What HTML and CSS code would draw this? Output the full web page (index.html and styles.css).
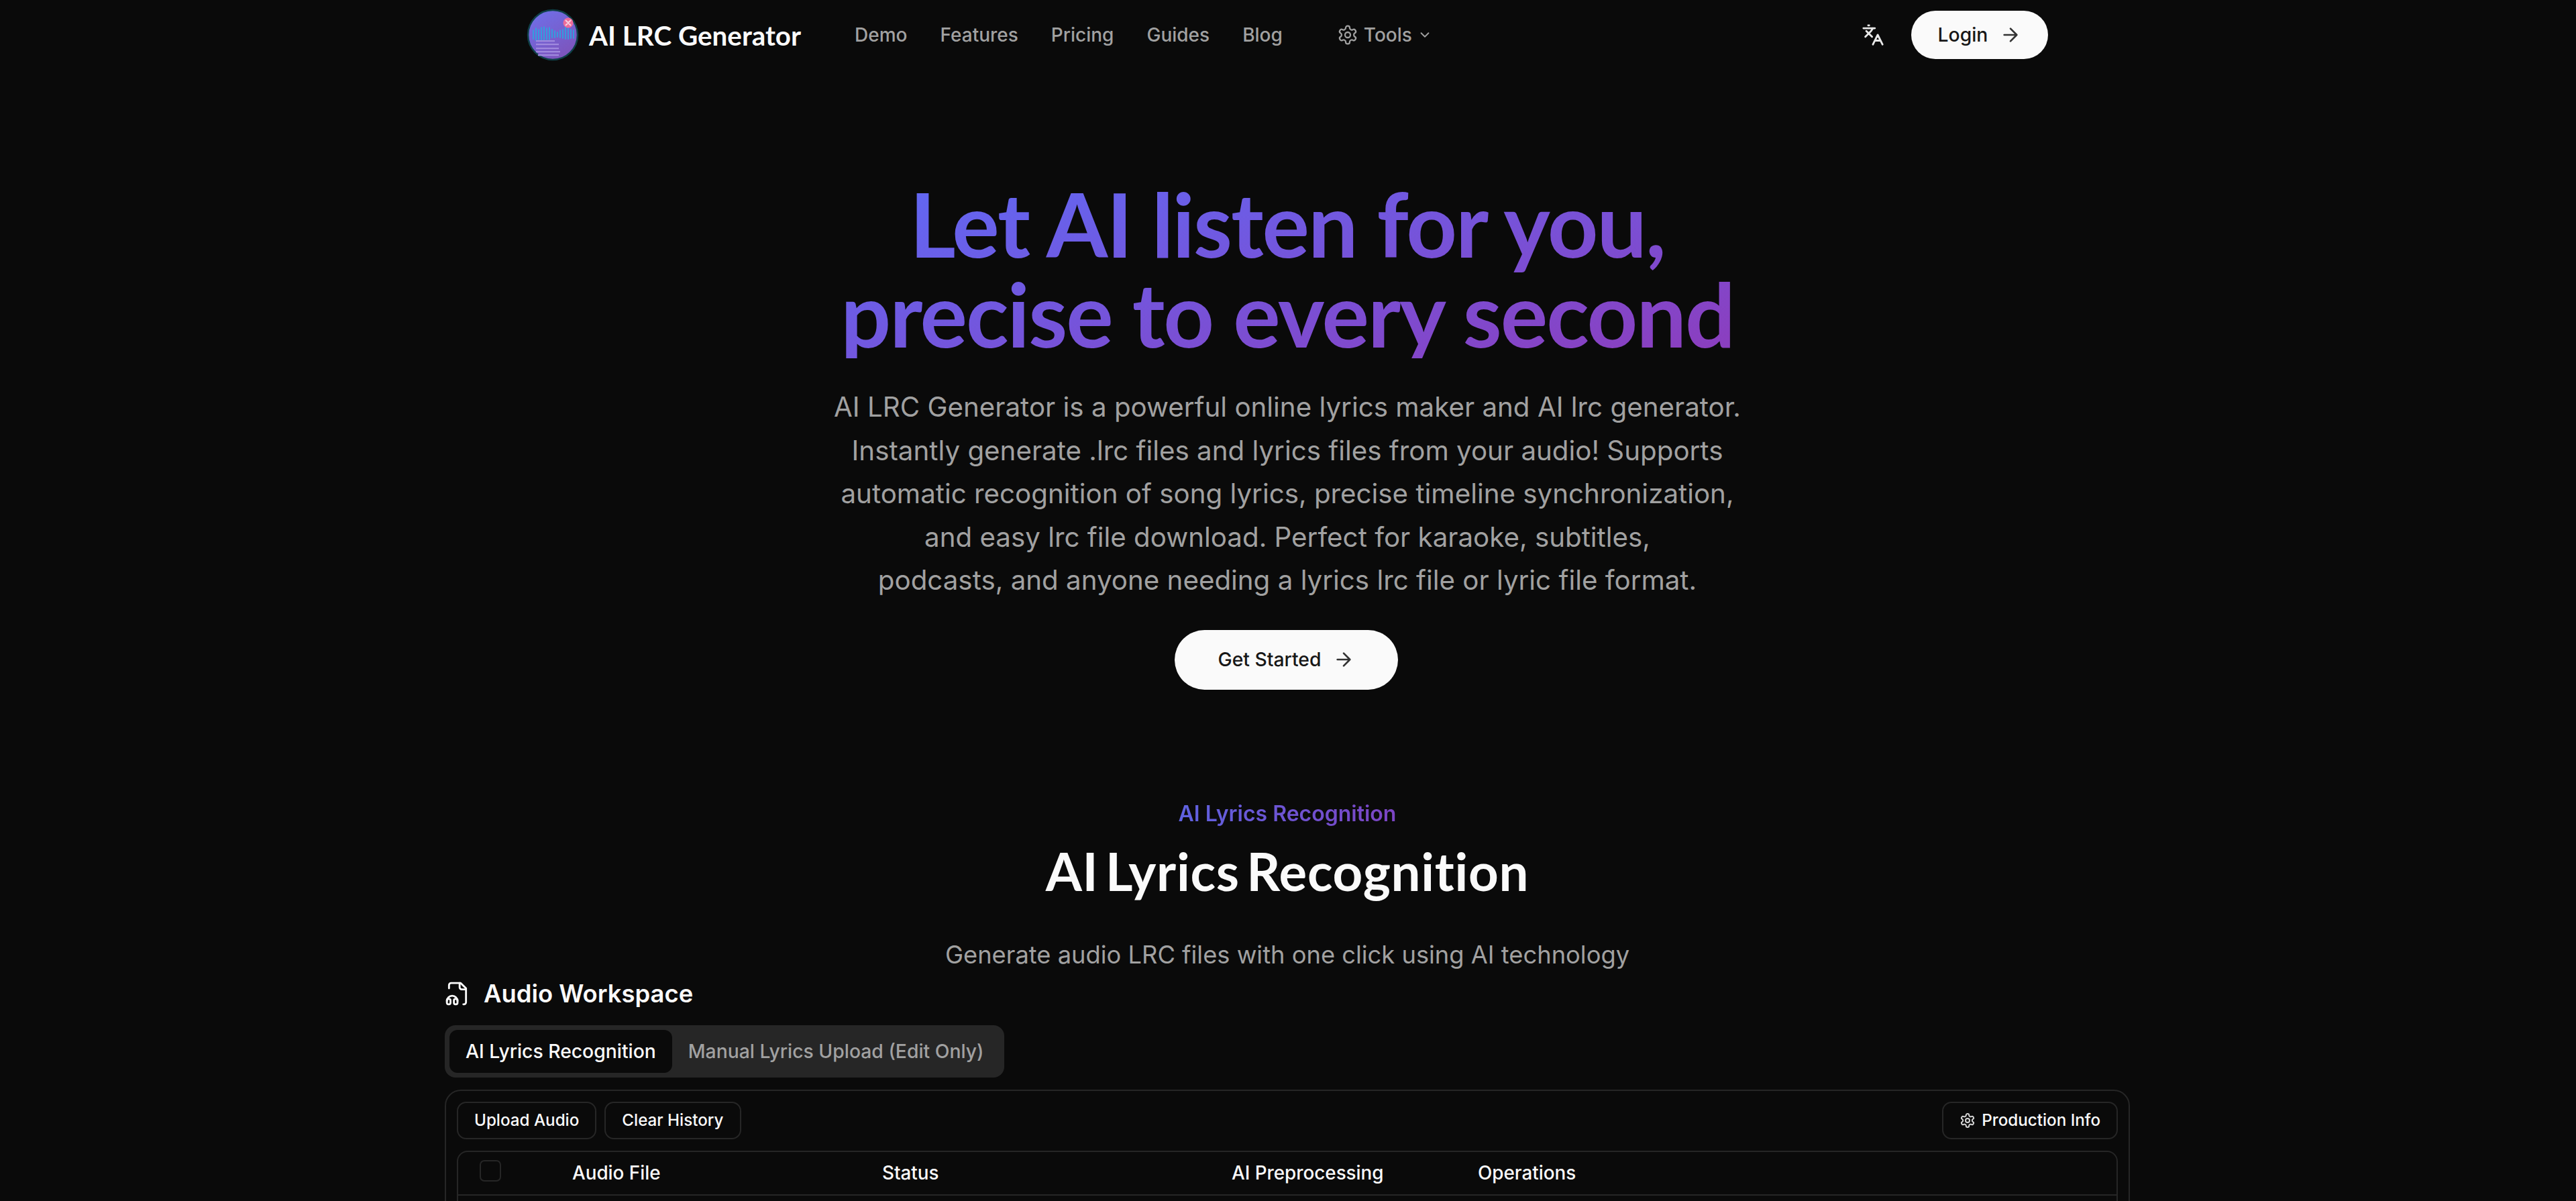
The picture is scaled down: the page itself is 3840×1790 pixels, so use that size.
FILE: index.html
```html
<!DOCTYPE html>
<html lang="en">
<head>
<meta charset="utf-8">
<title>AI LRC Generator</title>
<link rel="stylesheet" href="styles.css">
</head>
<body>
<header class="site-header">
  <div class="header-left">
    <a class="brand">
      <svg class="brand-logo" viewBox="0 0 78 78" aria-hidden="true">
        <defs>
          <linearGradient id="lg" x1="0.2" y1="0" x2="0.8" y2="1">
            <stop offset="0" stop-color="#6f6fe8"/><stop offset="1" stop-color="#7e52b8"/>
          </linearGradient>
        </defs>
        <circle cx="39" cy="39" r="37" fill="url(#lg)" stroke="#0f4048" stroke-width="2.5"/>
        <g stroke="#2aa8e0" stroke-width="1.7">
          <path d="M10 32v13M14 29v18M18 31v15M22 28v19M26 27v20M30 29v17M34 28v18M38 31v12M42 33v10M46 35v7M50 32v11M54 31v13M58 27v18M62 29v16M66 31v13M70 32v12"/>
        </g>
        <g fill="#a08ade">
          <rect x="14" y="47" width="28" height="2.2"/>
          <rect x="14" y="52" width="34" height="2.2"/>
          <rect x="14" y="58" width="34" height="2.2"/>
          <rect x="14" y="63" width="36" height="2.2"/>
          <rect x="17" y="68" width="31" height="2.2"/>
        </g>
        <circle cx="62" cy="21" r="7.5" fill="#ee6c9a"/>
        <path d="M58.5 17.5l7 7M65.5 17.5l-7 7" stroke="#f8d0e0" stroke-width="2"/>
      </svg>
      <span class="brand-name">AI LRC Generator</span>
    </a>
    <nav class="main-nav">
      <a>Demo</a><a>Features</a><a>Pricing</a><a>Guides</a><a>Blog</a>
      <a class="tools">
        <svg class="icon-gear" viewBox="0 0 24 24" aria-hidden="true"><path d="M12.22 2h-.44a2 2 0 0 0-2 2v.18a2 2 0 0 1-1 1.73l-.43.25a2 2 0 0 1-2 0l-.15-.08a2 2 0 0 0-2.73.73l-.22.38a2 2 0 0 0 .73 2.73l.15.1a2 2 0 0 1 1 1.72v.51a2 2 0 0 1-1 1.74l-.15.09a2 2 0 0 0-.73 2.73l.22.38a2 2 0 0 0 2.73.73l.15-.08a2 2 0 0 1 2 0l.43.25a2 2 0 0 1 1 1.73V20a2 2 0 0 0 2 2h.44a2 2 0 0 0 2-2v-.18a2 2 0 0 1 1-1.73l.43-.25a2 2 0 0 1 2 0l.15.08a2 2 0 0 0 2.73-.73l.22-.39a2 2 0 0 0-.73-2.73l-.15-.08a2 2 0 0 1-1-1.74v-.5a2 2 0 0 1 1-1.74l.15-.09a2 2 0 0 0 .73-2.73l-.22-.38a2 2 0 0 0-2.73-.73l-.15.08a2 2 0 0 1-2 0l-.43-.25a2 2 0 0 1-1-1.73V4a2 2 0 0 0-2-2z"/><circle cx="12" cy="12" r="3"/></svg>
        <span>Tools</span>
        <svg class="icon-chev" viewBox="0 0 24 24" aria-hidden="true"><path d="M6 9l6 6 6-6"/></svg>
      </a>
    </nav>
  </div>
  <div class="header-right">
    <svg class="icon-lang" viewBox="0 0 24 24" aria-hidden="true"><path d="M5 8l6 6M4 14l6-6 2-3M2 5h12M7 2h1M22 22l-5-10-5 10M14 18h6"/></svg>
    <a class="btn-pill btn-login">Login
      <svg class="icon-arrow" viewBox="0 0 24 24" aria-hidden="true"><path d="M5 12h14M12 5l7 7-7 7"/></svg>
    </a>
  </div>
</header>

<main>
  <section class="hero">
    <h1 class="hero-title"><span>Let AI listen for you,<br>precise to every second</span></h1>
    <p class="hero-sub">AI LRC Generator is a powerful online lyrics maker and AI lrc generator.<br>Instantly generate .lrc files and lyrics files from your audio! Supports<br>automatic recognition of song lyrics, precise timeline synchronization,<br>and easy lrc file download. Perfect for karaoke, subtitles,<br>podcasts, and anyone needing a lyrics lrc file or lyric file format.</p>
    <a class="btn-pill btn-start">Get Started
      <svg class="icon-arrow" viewBox="0 0 24 24" aria-hidden="true"><path d="M5 12h14M12 5l7 7-7 7"/></svg>
    </a>
  </section>

  <section class="section-head">
    <div class="eyebrow"><span>AI Lyrics Recognition</span></div>
    <h2 class="section-title">AI Lyrics Recognition</h2>
    <p class="section-sub">Generate audio LRC files with one click using AI technology</p>
  </section>

  <section class="workspace">
    <div class="ws-title">
      <svg class="icon-audio" viewBox="0 0 24 24" aria-hidden="true"><path d="M17.5 22H18a2 2 0 0 0 2-2V7l-5-5H6a2 2 0 0 0-2 2v3"/><path d="M14 2v4a2 2 0 0 0 2 2h4"/><path d="M2 19a5 5 0 0 1 10 0"/><rect x="2" y="17" width="3.4" height="5" rx="1.4"/><rect x="8.6" y="17" width="3.4" height="5" rx="1.4"/></svg>
      <span>Audio Workspace</span>
    </div>
    <div class="tabs">
      <button class="tab tab-active">AI Lyrics Recognition</button>
      <button class="tab">Manual Lyrics Upload (Edit Only)</button>
    </div>
    <div class="card">
      <div class="toolbar">
        <div class="toolbar-group">
          <button class="btn-outline">Upload Audio</button>
          <button class="btn-outline">Clear History</button>
        </div>
        <button class="btn-outline btn-info">
          <svg class="icon-gear-sm" viewBox="0 0 24 24" aria-hidden="true"><path d="M12.22 2h-.44a2 2 0 0 0-2 2v.18a2 2 0 0 1-1 1.73l-.43.25a2 2 0 0 1-2 0l-.15-.08a2 2 0 0 0-2.73.73l-.22.38a2 2 0 0 0 .73 2.73l.15.1a2 2 0 0 1 1 1.72v.51a2 2 0 0 1-1 1.74l-.15.09a2 2 0 0 0-.73 2.73l.22.38a2 2 0 0 0 2.73.73l.15-.08a2 2 0 0 1 2 0l.43.25a2 2 0 0 1 1 1.73V20a2 2 0 0 0 2 2h.44a2 2 0 0 0 2-2v-.18a2 2 0 0 1 1-1.73l.43-.25a2 2 0 0 1 2 0l.15.08a2 2 0 0 0 2.73-.73l.22-.39a2 2 0 0 0-.73-2.73l-.15-.08a2 2 0 0 1-1-1.74v-.5a2 2 0 0 1 1-1.74l.15-.09a2 2 0 0 0 .73-2.73l-.22-.38a2 2 0 0 0-2.73-.73l-.15.08a2 2 0 0 1-2 0l-.43-.25a2 2 0 0 1-1-1.73V4a2 2 0 0 0-2-2z"/><circle cx="12" cy="12" r="3"/></svg>
          Production Info
        </button>
      </div>
      <div class="table">
        <div class="table-head">
          <span class="checkbox"></span>
          <span>Audio File</span>
          <span>Status</span>
          <span>AI Preprocessing</span>
          <span>Operations</span>
        </div>
      </div>
    </div>
  </section>
</main>
</body>
</html>
```
FILE: styles.css
```css
* { box-sizing: border-box; }
html, body { margin: 0; height: 100%; overflow: hidden; }
body { background: #0a0a0a; color: #fafafa; font-family: Inter, "Liberation Sans", sans-serif; }
a { color: inherit; text-decoration: none; }
svg { display: block; flex: none; fill: none; stroke: currentColor; stroke-linecap: round; stroke-linejoin: round; }
main { padding-right: 2px; }

.site-header { width: 2266px; height: 104px; margin: 0 auto; display: flex; justify-content: space-between; align-items: center; }
.header-left { display: flex; align-items: center; gap: 80px; }
.brand { display: flex; align-items: center; gap: 15px; }
.brand-logo { width: 78px; height: 78px; margin-left: -2px; stroke: none; }
.brand-name { font-family: Lato, sans-serif; font-weight: 700; font-size: 40.4px; color: #fafafa; }
.main-nav { display: flex; align-items: center; gap: 49px; color: #a1a1a1; font-size: 28px; font-weight: 500; }
.tools { display: flex; align-items: center; gap: 8px; margin-left: 32px; }
.icon-gear { width: 32px; height: 32px; stroke-width: 1.7; }
.icon-chev { width: 22px; height: 22px; stroke-width: 2; }
.header-right { display: flex; align-items: center; gap: 40px; }
.icon-lang { width: 34px; height: 34px; stroke-width: 2; color: #e8e8e8; }
.btn-pill { display: flex; align-items: center; justify-content: center; background: #fafafa; color: #171717; border-radius: 999px; font-weight: 500; font-size: 28.3px; }
.btn-login { width: 204px; height: 72px; gap: 18px; }
.icon-arrow { width: 32px; height: 32px; stroke-width: 2; color: #333; }

.hero { display: flex; flex-direction: column; align-items: center; padding-top: 162px; }
.hero-title { margin: 0; font-family: Lato, sans-serif; font-weight: 700; font-size: 132px; line-height: 134px; letter-spacing: -2px; text-align: center; }
.hero-title span { display: block; background: linear-gradient(165deg, #6366f1 10%, #8a3fc0 95%); -webkit-background-clip: text; background-clip: text; color: transparent; }
.hero-sub { margin: 41px 0 0; color: #a1a1a1; font-size: 40.3px; line-height: 64.5px; text-align: center; }
.btn-start { width: 333px; height: 89px; margin: 41px 3px 0 0; gap: 18px; }

.section-head { display: flex; flex-direction: column; align-items: center; padding-top: 165px; }
.eyebrow { font-size: 32px; font-weight: 600; line-height: 40px; }
.eyebrow span { background: linear-gradient(90deg, #5f62e0, #7c45c4); -webkit-background-clip: text; background-clip: text; color: transparent; }
.section-title { margin: 17px 0 0; font-family: Lato, sans-serif; font-weight: 700; font-size: 78px; line-height: 96px; letter-spacing: .7px; word-spacing: -9px; }
.section-sub { margin: 53px 0 0; color: #a1a1a1; font-size: 36.3px; line-height: 48px; }

.workspace { width: 2512px; margin: 12px auto 0; }
.ws-title { display: flex; align-items: center; gap: 20px; height: 44px; font-size: 36.4px; font-weight: 600; }
.icon-audio { width: 38px; height: 38px; stroke-width: 1.8; }
.tabs { display: inline-flex; margin-top: 25px; padding: 7px; background: #262626; border-radius: 16px; color: #a1a1a1; vertical-align: top; }
.tab { height: 64px; padding: 0 24px; border: 0; border-radius: 12px; background: transparent; color: inherit; font: 500 28.3px Inter, sans-serif; }
.tab-active { background: #0a0a0a; color: #fafafa; }
.card { margin-top: 18px; padding: 16px 16px 0; border: 2px solid #262626; border-radius: 24px; height: 300px; }
.toolbar { display: flex; justify-content: space-between; }
.toolbar-group { display: flex; gap: 12px; }
.btn-outline { display: flex; align-items: center; height: 56px; padding: 0 24px; border: 2px solid #262626; border-radius: 14px; background: #0a0a0a; color: #fafafa; font: 500 24.2px Inter, sans-serif; }
.btn-info { gap: 9px; }
.icon-gear-sm { width: 24px; height: 24px; stroke-width: 2; color: #d4d4d4; }
.table { margin-top: 17px; border: 2px solid #262626; border-radius: 16px; height: 300px; }
.table-head { display: grid; grid-template-columns: 138px 462px 521px 367px 1fr; align-items: center; height: 65px; padding-left: 32px; border-bottom: 2px solid #262626; font-size: 27.8px; font-weight: 500; }
.checkbox { width: 32px; height: 32px; margin-top: -6px; border: 2px solid #262626; border-radius: 7px; }
```
